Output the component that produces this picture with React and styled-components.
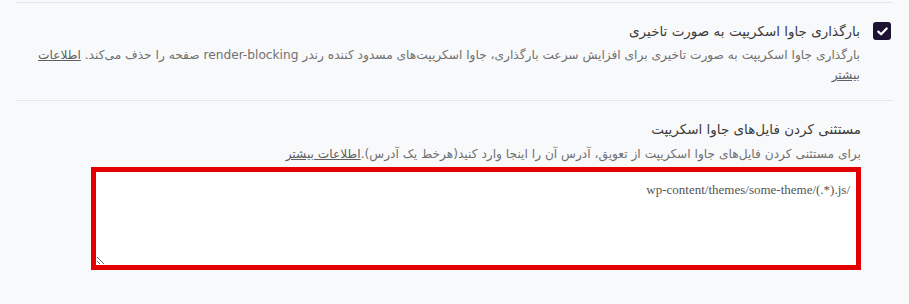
import styled, { createGlobalStyle } from "styled-components";

const Global = createGlobalStyle`
  body {
    margin: 0;
    background: #f8f9fa;
    font-family: "DejaVu Sans", "Noto Sans", sans-serif;
  }
`;

function App() {
  return (
    <>
      <Global />
      <Pagina>
        <Fila>
          <Casilla>
            <svg width="11" height="9" viewBox="0 0 11 9">
              <path d="M1.3 4.6 L4.1 7.3 L9.7 1.5" fill="none" stroke="#fff" strokeWidth="2.2" strokeLinecap="round" strokeLinejoin="round" />
            </svg>
          </Casilla>
          <Contenido>
            <Titulo>بارگذاری جاوا اسکریپت به صورت تاخیری</Titulo>
            <Descripcion>
              بارگذاری جاوا اسکریپت به صورت تاخیری برای افزایش سرعت بارگذاری، جاوا اسکریپت‌های مسدود کننده رندر render-blocking صفحه را حذف می‌کند. <Enlace href="#">اطلاعات بیشتر</Enlace>
            </Descripcion>
          </Contenido>
        </Fila>
        <Fila $sangria>
          <Contenido>
            <Titulo>مستثنی کردن فایل‌های جاوا اسکریپت</Titulo>
            <Descripcion $arriba={5}>
              برای مستثنی کردن فایل‌های جاوا اسکریپت از تعویق، آدرس آن را اینجا وارد کنید(هرخط یک آدرس).<Enlace href="#">اطلاعات بیشتر</Enlace>
            </Descripcion>
            <AreaTexto defaultValue="/wp-content/themes/some-theme/(.*).js" />
          </Contenido>
        </Fila>
      </Pagina>
    </>
  );
}

const Pagina = styled.div`
  direction: rtl;
  padding: 2px 16px 0 16px;
`;

const Fila = styled.div`
  display: flex;
  align-items: flex-start;
  gap: 13px;
  border-top: 1px solid #e4e6e8;
  padding: ${(p) => (p.$sangria ? "18px 32px 30px 24px" : "18px 2px 15px 10px")};
`;

const Casilla = styled.span`
  flex: none;
  width: 18px;
  height: 18px;
  margin-top: 1px;
  border-radius: 3px;
  background: #1d1232;
  display: flex;
  align-items: center;
  justify-content: center;
`;

const Contenido = styled.div`
  flex: 1;
  display: flex;
  flex-direction: column;
`;

const Titulo = styled.div`
  font-size: 13.5px;
  line-height: 20px;
  color: #3c3c3c;
`;

const Descripcion = styled.p`
  margin: ${(p) => p.$arriba || 4}px 0 0 0;
  font-size: 12.2px;
  line-height: 20px;
  color: #707070;
`;

const Enlace = styled.a`
  color: #606060;
  text-decoration: underline;
`;

const AreaTexto = styled.textarea`
  margin-top: 3px;
  width: 770px;
  height: 103px;
  box-sizing: border-box;
  border: 5px solid #e40000;
  background: #fff;
  padding: 10px 6px;
  font-family: "Liberation Serif", serif;
  font-size: 13px;
  color: #555;
  direction: rtl;
  outline: none;
`;

export default App;
